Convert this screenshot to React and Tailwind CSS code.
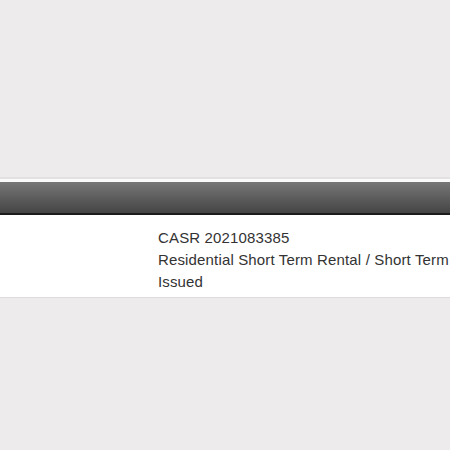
export default function App() {
  const lines = [
    "CASR 2021083385",
    "Residential Short Term Rental / Short Term Rental",
    "Issued",
    "Jun 21, 2022",
  ];
  return (
    <div className="w-[450px] h-[450px] flex flex-col bg-[#edebeb] overflow-hidden" style={{ fontFamily: '"Liberation Sans", Arial, sans-serif' }}>
      <div className="h-[177px] bg-[#edebeb]" />
      <div className="h-[2px] bg-[#e3e1e1]" />
      <div className="h-[3px] bg-[#fafafa]" />
      {/* header bar */}
      <div className="h-[31px] bg-gradient-to-b from-[#777777] to-[#454545]" />
      <div className="h-[2px] bg-[#1c1c1c]" />
      {/* record details */}
      <div className="h-[82px] bg-white overflow-hidden pl-[158px] pt-[12px]">
        {lines.map((t) => (
          <div key={t} className="text-[15px] leading-[22px] tracking-[0.15px] text-[#333333] whitespace-nowrap">
            {t}
          </div>
        ))}
      </div>
      <div className="flex-1 bg-[#edebeb] border-t border-[#dddbdb]" />
    </div>
  );
}
